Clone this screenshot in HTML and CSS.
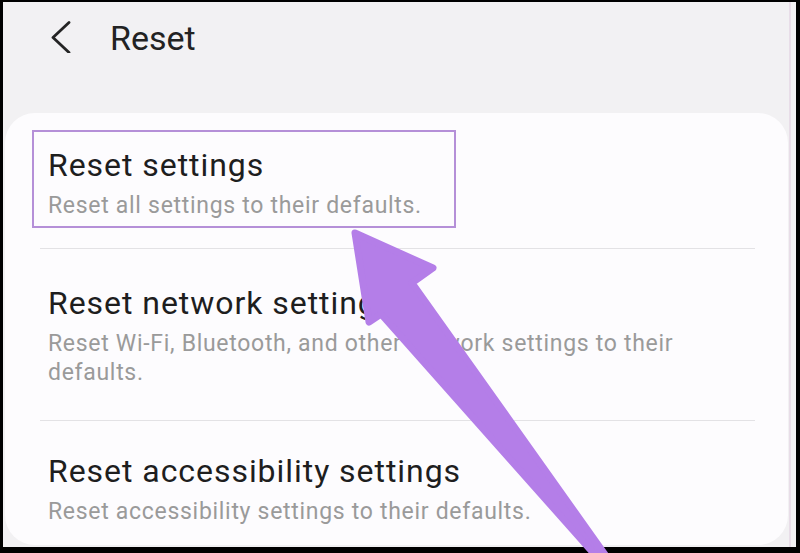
FILE: index.html
```html
<!DOCTYPE html>
<html lang="en">
<head>
<meta charset="utf-8">
<title>Reset</title>
<link rel="stylesheet" href="styles.css">
</head>
<body>
<div class="frame">
  <header class="header">
    <svg class="back" width="22" height="32" viewBox="0 0 22 32" aria-hidden="true">
      <polyline points="19,1.5 3,16.5 19,31.5" fill="none" stroke="#242424" stroke-width="2.8" stroke-linecap="round" stroke-linejoin="round"/>
    </svg>
    <h1 class="page-title">Reset</h1>
  </header>
  <main class="card">
    <div class="item item-highlight">
      <div class="item-title">Reset settings</div>
      <div class="item-sub">Reset all settings to their defaults.</div>
    </div>
    <div class="divider"></div>
    <div class="item item-network">
      <div class="item-title">Reset network settings</div>
      <div class="item-sub">Reset Wi-Fi, Bluetooth, and other network settings to their defaults.</div>
    </div>
    <div class="divider"></div>
    <div class="item item-access">
      <div class="item-title">Reset accessibility settings</div>
      <div class="item-sub">Reset accessibility settings to their defaults.</div>
    </div>
  </main>
</div>
<svg class="arrow" width="800" height="553" viewBox="0 0 800 553" aria-hidden="true">
  <polygon points="355,233 433,268 412,283 606,556 596,556 381,314 369,322" fill="#b47ee8" stroke="#b47ee8" stroke-width="7" stroke-linejoin="round"/>
</svg>
</body>
</html>
```

FILE: styles.css
```css
html, body {
  margin: 0;
  padding: 0;
}
body {
  width: 800px;
  height: 553px;
  background: #000;
  position: relative;
  overflow: hidden;
  font-family: Roboto, "Noto Sans", Arial, sans-serif;
}
.frame {
  margin: 2px 4px 0 3px;
  height: 545px;
  background: #f2f1f3;
  display: flex;
  flex-direction: column;
  box-shadow: inset -5px 0 0 #f2f1f3, inset -7px 0 0 #e8dde8;
}
.header {
  height: 111px;
  box-sizing: border-box;
  padding: 16px 0 0 47px;
  display: flex;
  align-items: flex-start;
  gap: 38px;
  flex-shrink: 0;
}
.back {
  margin-top: 3px;
  display: block;
}
.page-title {
  margin: 0;
  font-size: 34px;
  line-height: 40px;
  font-weight: 400;
  color: #222;
}
.card {
  flex: 1;
  margin: 0 8px 2px 2px;
  background: #fdfcfe;
  border-radius: 30px;
  padding-top: 17px;
  box-sizing: border-box;
}
.item-title {
  font-size: 32px;
  line-height: 40px;
  letter-spacing: 0.95px;
  color: #1e1e1e;
}
.item-sub {
  margin-top: 6px;
  font-size: 23px;
  line-height: 29px;
  letter-spacing: 0.7px;
  color: #9a9a9a;
}
.item-highlight {
  margin-left: 27px;
  width: 424px;
  box-sizing: border-box;
  border: 2px solid #b590d8;
  padding: 13px 0 6px 14px;
}
.divider {
  height: 1px;
  background: #e3e2e5;
  margin: 0 33px 0 35px;
}
.item-highlight + .divider {
  margin-top: 20px;
}
.item-network {
  padding: 34px 50px 33px 43px;
}
.item-access {
  padding: 30px 50px 0 43px;
}
.arrow {
  position: absolute;
  left: 0;
  top: 0;
  pointer-events: none;
}
```
